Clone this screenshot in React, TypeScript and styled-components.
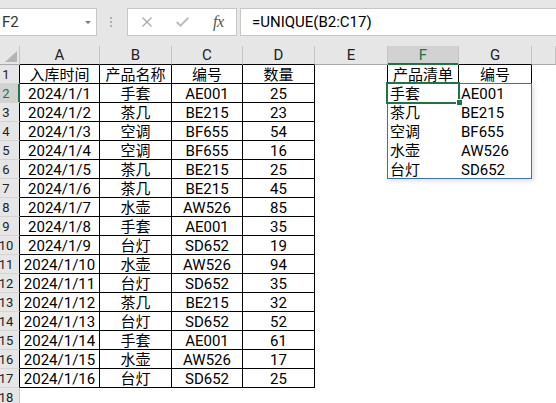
import styled, { createGlobalStyle } from "styled-components";

const GREEN = "#217346";
const HEAD_BG = "#e6e6e6";
const HEAD_LINE = "#c4c4c4";
const BLACK = "#000";

const GlobalStyle = createGlobalStyle`
  html, body {
    margin: 0;
    padding: 0;
    background: #fff;
    overflow: hidden;
  }
  body {
    font-family: Roboto, "Noto Sans CJK SC", sans-serif;
  }
`;

type Row = [string, string, string, string];

const rows: Row[] = [
  ["入库时间", "产品名称", "编号", "数量"],
  ["2024/1/1", "手套", "AE001", "25"],
  ["2024/1/2", "茶几", "BE215", "23"],
  ["2024/1/3", "空调", "BF655", "54"],
  ["2024/1/4", "空调", "BF655", "16"],
  ["2024/1/5", "茶几", "BE215", "25"],
  ["2024/1/6", "茶几", "BE215", "45"],
  ["2024/1/7", "水壶", "AW526", "85"],
  ["2024/1/8", "手套", "AE001", "35"],
  ["2024/1/9", "台灯", "SD652", "19"],
  ["2024/1/10", "水壶", "AW526", "94"],
  ["2024/1/11", "台灯", "SD652", "35"],
  ["2024/1/12", "茶几", "BE215", "32"],
  ["2024/1/13", "台灯", "SD652", "52"],
  ["2024/1/14", "手套", "AE001", "61"],
  ["2024/1/15", "水壶", "AW526", "17"],
  ["2024/1/16", "台灯", "SD652", "25"],
];

// spilled result of =UNIQUE(B2:C17)
const unique: [string, string][] = [
  ["手套", "AE001"],
  ["茶几", "BE215"],
  ["空调", "BF655"],
  ["水壶", "AW526"],
  ["台灯", "SD652"],
];

const columns = ["A", "B", "C", "D", "E", "F", "G", ""];

export default function App() {
  return (
    <Window>
      <GlobalStyle />
      <FormulaBar>
        <NameBox>
          F2
          <svg width="6" height="3" viewBox="0 0 6 3">
            <path d="M0 0 H6 L3 3 Z" fill="#7a7a7a" />
          </svg>
        </NameBox>
        <Splitter>
          <svg width="2" height="10" viewBox="0 0 2 10">
            <rect x="0" y="0" width="2" height="2" fill="#b0b0b0" />
            <rect x="0" y="4" width="2" height="2" fill="#b0b0b0" />
            <rect x="0" y="8" width="2" height="2" fill="#b0b0b0" />
          </svg>
        </Splitter>
        <FxBox>
          <svg width="10" height="10" viewBox="0 0 10 10">
            <path d="M0.5 0.5 L9.5 9.5 M9.5 0.5 L0.5 9.5" stroke="#a8a8a8" strokeWidth="1.3" />
          </svg>
          <svg width="13" height="10" viewBox="0 0 13 10">
            <path d="M0.8 5 L4.5 8.6 L12.3 0.8" stroke="#bcbcbc" strokeWidth="2" fill="none" />
          </svg>
          <FxLabel>fx</FxLabel>
        </FxBox>
        <FormulaInput>=UNIQUE(B2:C17)</FormulaInput>
      </FormulaBar>

      <Sheet>
        <Corner>
          <svg width="12" height="11" viewBox="0 0 12 11">
            <path d="M12 0 V11 H0 Z" fill="#b4b4b4" />
          </svg>
        </Corner>
        {columns.map((c, i) => (
          <ColHead
            key={i}
            $active={c === "F"}
            $bottom={i <= 3 || c === "F" || c === "G" ? BLACK : "#a8a8a8"}
          >
            {c}
          </ColHead>
        ))}

        {Array.from({ length: 18 }).map((_, idx) => {
          const r = idx + 1;
          const data = rows[idx];
          const spill = r >= 2 && r <= 6 ? unique[r - 2] : null;
          return [
            <RowHead key={`h${r}`} $active={r === 2} $edge={data ? BLACK : HEAD_LINE}>
              <span>{r}</span>
            </RowHead>,
            ...[0, 1, 2, 3].map((c) => (
              <Cell
                key={`${r}-${c}`}
                $right={data ? BLACK : undefined}
                $bottom={data ? BLACK : undefined}
              >
                {data ? data[c] : ""}
              </Cell>
            )),
            <Cell key={`${r}-E`} $right={r === 1 ? BLACK : undefined} />,
            r === 1 ? (
              <Cell key={`${r}-F`} $right={BLACK} $bottom={BLACK}>
                产品清单
              </Cell>
            ) : r === 2 ? (
              <Cell key={`${r}-F`} $align="left">
                {spill?.[0]}
                <SpillFrame />
                <Selection>
                  <FillHandle />
                </Selection>
              </Cell>
            ) : (
              <Cell key={`${r}-F`} $align="left">
                {spill?.[0]}
              </Cell>
            ),
            r === 1 ? (
              <Cell key={`${r}-G`} $right={BLACK} $bottom={BLACK}>
                编号
              </Cell>
            ) : (
              <Cell key={`${r}-G`} $align="left">
                {spill?.[1]}
              </Cell>
            ),
            <Cell key={`${r}-H`} />,
          ];
        })}
      </Sheet>
    </Window>
  );
}

const Window = styled.div`
  width: 556px;
  height: 403px;
  overflow: hidden;
  background: #fff;
`;

const FormulaBar = styled.div`
  display: flex;
  align-items: flex-start;
  box-sizing: border-box;
  height: 46px;
  padding-top: 8px;
  background: ${HEAD_BG};
`;

const NameBox = styled.div`
  box-sizing: border-box;
  width: 98px;
  height: 28px;
  margin-left: -1px;
  display: flex;
  align-items: center;
  justify-content: space-between;
  padding: 0 5px 0 2px;
  background: #fff;
  border: 1px solid #c6c6c6;
  font-size: 15px;
  color: #333;
`;

const Splitter = styled.div`
  width: 30px;
  height: 28px;
  display: flex;
  align-items: center;
  justify-content: center;
  padding-right: 2px;
  box-sizing: border-box;
`;

const FxBox = styled.div`
  box-sizing: border-box;
  width: 110px;
  height: 28px;
  display: flex;
  align-items: center;
  gap: 24px;
  padding-left: 14px;
  background: #fff;
  border: 1px solid #c6c6c6;
`;

const FxLabel = styled.span`
  font-family: "Liberation Serif", serif;
  font-style: italic;
  font-size: 16px;
  color: #555;
  letter-spacing: -0.5px;
`;

const FormulaInput = styled.div`
  box-sizing: border-box;
  flex: 1;
  height: 28px;
  margin-left: 3px;
  margin-right: -1px;
  display: flex;
  align-items: center;
  padding-left: 11px;
  background: #fff;
  border: 1px solid #c6c6c6;
  font-size: 15px;
  color: #000;
`;

const Sheet = styled.div`
  display: grid;
  grid-template-columns: 20px 80px 72px 71px 72px 73px 71px 73px 1fr;
  grid-auto-rows: 19px;
`;

const Corner = styled.div`
  box-sizing: border-box;
  display: flex;
  align-items: flex-end;
  justify-content: flex-end;
  padding: 0 2px 2px 0;
  background: ${HEAD_BG};
  border-right: 1px solid ${HEAD_LINE};
  border-bottom: 1px solid #a8a8a8;
`;

const ColHead = styled.div<{ $active?: boolean; $bottom: string }>`
  box-sizing: border-box;
  display: flex;
  align-items: center;
  justify-content: center;
  font-size: 15px;
  color: ${(p) => (p.$active ? GREEN : "#222")};
  background: ${(p) => (p.$active ? "#d2d2d2" : HEAD_BG)};
  border-right: 1px solid ${HEAD_LINE};
  border-bottom: 1px solid ${(p) => (p.$active ? GREEN : p.$bottom)};
  box-shadow: ${(p) => (p.$active ? `inset 0 -1px 0 ${GREEN}` : "none")};
`;

const RowHead = styled.div<{ $active?: boolean; $edge: string }>`
  box-sizing: border-box;
  display: flex;
  align-items: center;
  font-size: 13px;
  color: ${(p) => (p.$active ? GREEN : "#222")};
  background: ${(p) => (p.$active ? "#d2d2d2" : HEAD_BG)};
  border-right: 1px solid ${(p) => (p.$active ? GREEN : p.$edge)};
  border-bottom: 1px solid #d4d4d4;
  box-shadow: ${(p) => (p.$active ? `inset -1px 0 0 ${GREEN}` : "none")};

  span {
    width: 12px;
    text-align: center;
    white-space: nowrap;
    display: flex;
    justify-content: center;
  }
`;

const Cell = styled.div<{ $align?: "center" | "left"; $right?: string; $bottom?: string }>`
  position: relative;
  box-sizing: border-box;
  display: flex;
  align-items: flex-end;
  justify-content: ${(p) => (p.$align === "left" ? "flex-start" : "center")};
  padding: 0 0 0 ${(p) => (p.$align === "left" ? "2px" : "0")};
  border-right: 1px solid ${(p) => p.$right ?? "transparent"};
  border-bottom: 1px solid ${(p) => p.$bottom ?? "transparent"};
  font-size: 15px;
  line-height: 15px;
  white-space: nowrap;
  color: #000;
`;

const SpillFrame = styled.div`
  position: absolute;
  left: -1px;
  top: -1px;
  width: 145px;
  height: 96px;
  box-sizing: border-box;
  border: 1px solid #3a6fc8;
  box-shadow: 2px 2px 5px rgba(0, 0, 0, 0.12);
  pointer-events: none;
  z-index: 1;
`;

const Selection = styled.div`
  position: absolute;
  inset: -2px;
  border: 2px solid ${GREEN};
  pointer-events: none;
  z-index: 2;
`;

const FillHandle = styled.div`
  position: absolute;
  right: -5px;
  bottom: -4px;
  width: 7px;
  height: 7px;
  box-sizing: border-box;
  background: ${GREEN};
  border: 1px solid #fff;
`;
